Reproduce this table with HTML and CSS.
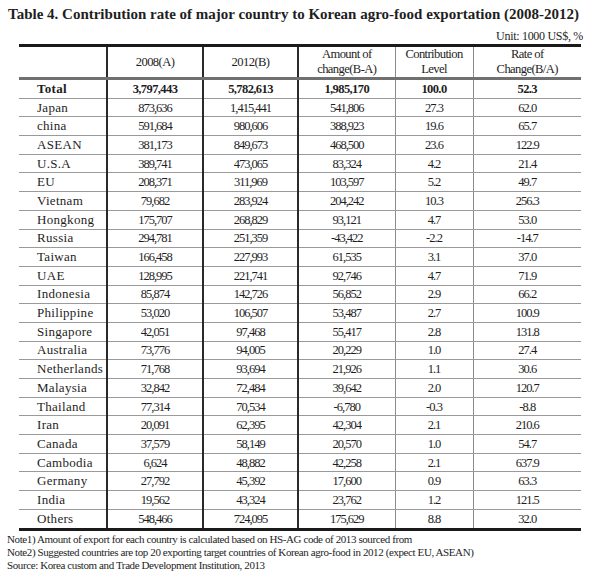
FILE: index.html
```html
<!DOCTYPE html>
<html>
<head>
<meta charset="utf-8">
<link rel="stylesheet" href="styles.css">
</head>
<body>
<div class="page">
  <h1 class="title">Table 4. Contribution rate of major country to Korean agro-food exportation (2008-2012)</h1>
  <div class="unit">Unit: 1000 US$, %</div>
  <table class="data">
    <colgroup>
      <col class="c-name"><col class="c-a"><col class="c-b"><col class="c-chg"><col class="c-lvl"><col class="c-rate">
    </colgroup>
    <thead>
      <tr>
        <th class="name"></th>
        <th class="thick">2008(A)</th>
        <th class="thick">2012(B)</th>
        <th>Amount of<br>change(B-A)</th>
        <th>Contribution<br>Level</th>
        <th>Rate of<br>Change(B/A)</th>
      </tr>
    </thead>
    <tbody>
      <tr class="total"><td class="name">Total</td><td class="thick">3,797,443</td><td class="thick">5,782,613</td><td>1,985,170</td><td>100.0</td><td>52.3</td></tr>
      <tr><td class="name">Japan</td><td class="thick">873,636</td><td class="thick">1,415,441</td><td>541,806</td><td>27.3</td><td>62.0</td></tr>
      <tr><td class="name">china</td><td class="thick">591,684</td><td class="thick">980,606</td><td>388,923</td><td>19.6</td><td>65.7</td></tr>
      <tr><td class="name">ASEAN</td><td class="thick">381,173</td><td class="thick">849,673</td><td>468,500</td><td>23.6</td><td>122.9</td></tr>
      <tr><td class="name">U.S.A</td><td class="thick">389,741</td><td class="thick">473,065</td><td>83,324</td><td>4.2</td><td>21.4</td></tr>
      <tr><td class="name">EU</td><td class="thick">208,371</td><td class="thick">311,969</td><td>103,597</td><td>5.2</td><td>49.7</td></tr>
      <tr><td class="name">Vietnam</td><td class="thick">79,682</td><td class="thick">283,924</td><td>204,242</td><td>10.3</td><td>256.3</td></tr>
      <tr><td class="name">Hongkong</td><td class="thick">175,707</td><td class="thick">268,829</td><td>93,121</td><td>4.7</td><td>53.0</td></tr>
      <tr><td class="name">Russia</td><td class="thick">294,781</td><td class="thick">251,359</td><td>-43,422</td><td>-2.2</td><td>-14.7</td></tr>
      <tr><td class="name">Taiwan</td><td class="thick">166,458</td><td class="thick">227,993</td><td>61,535</td><td>3.1</td><td>37.0</td></tr>
      <tr><td class="name">UAE</td><td class="thick">128,995</td><td class="thick">221,741</td><td>92,746</td><td>4.7</td><td>71.9</td></tr>
      <tr><td class="name">Indonesia</td><td class="thick">85,874</td><td class="thick">142,726</td><td>56,852</td><td>2.9</td><td>66.2</td></tr>
      <tr><td class="name">Philippine</td><td class="thick">53,020</td><td class="thick">106,507</td><td>53,487</td><td>2.7</td><td>100.9</td></tr>
      <tr><td class="name">Singapore</td><td class="thick">42,051</td><td class="thick">97,468</td><td>55,417</td><td>2.8</td><td>131.8</td></tr>
      <tr><td class="name">Australia</td><td class="thick">73,776</td><td class="thick">94,005</td><td>20,229</td><td>1.0</td><td>27.4</td></tr>
      <tr><td class="name">Netherlands</td><td class="thick">71,768</td><td class="thick">93,694</td><td>21,926</td><td>1.1</td><td>30.6</td></tr>
      <tr><td class="name">Malaysia</td><td class="thick">32,842</td><td class="thick">72,484</td><td>39,642</td><td>2.0</td><td>120.7</td></tr>
      <tr><td class="name">Thailand</td><td class="thick">77,314</td><td class="thick">70,534</td><td>-6,780</td><td>-0.3</td><td>-8.8</td></tr>
      <tr><td class="name">Iran</td><td class="thick">20,091</td><td class="thick">62,395</td><td>42,304</td><td>2.1</td><td>210.6</td></tr>
      <tr><td class="name">Canada</td><td class="thick">37,579</td><td class="thick">58,149</td><td>20,570</td><td>1.0</td><td>54.7</td></tr>
      <tr><td class="name">Cambodia</td><td class="thick">6,624</td><td class="thick">48,882</td><td>42,258</td><td>2.1</td><td>637.9</td></tr>
      <tr><td class="name">Germany</td><td class="thick">27,792</td><td class="thick">45,392</td><td>17,600</td><td>0.9</td><td>63.3</td></tr>
      <tr><td class="name">India</td><td class="thick">19,562</td><td class="thick">43,324</td><td>23,762</td><td>1.2</td><td>121.5</td></tr>
      <tr class="last"><td class="name">Others</td><td class="thick">548,466</td><td class="thick">724,095</td><td>175,629</td><td>8.8</td><td>32.0</td></tr>
    </tbody>
  </table>
  <div class="notes">
    <p>Note1) Amount of export for each country is calculated based on HS-AG code of 2013 sourced from</p>
    <p>Note2) Suggested countries are top 20 exporting target countries of Korean agro-food in 2012 (expect EU, ASEAN)</p>
    <p>Source: Korea custom and Trade Development Institution, 2013</p>
  </div>
</div>
</body>
</html>
```

FILE: styles.css
```css
html, body {
  margin: 0;
  padding: 0;
  background: #ffffff;
}

.page {
  width: 600px;
  height: 574px;
  box-sizing: border-box;
  padding: 5px 0 0 8px;
  font-family: "Liberation Serif", "Times New Roman", serif;
  color: #1e1e1e;
}

.title {
  margin: 0;
  font-size: 15px;
  font-weight: bold;
  line-height: 18px;
  letter-spacing: 0;
  white-space: nowrap;
}

.unit {
  margin-top: 7px;
  padding-right: 17px;
  text-align: right;
  font-size: 12px;
  line-height: 12px;
  letter-spacing: -0.3px;
}

.data {
  margin: 2px 0 0 11px;
  width: 562px;
  border-collapse: collapse;
  table-layout: fixed;
  border-top: 3px solid #1a1a1a;
  border-bottom: 3px solid #1a1a1a;
}

.c-name { width: 88px; }
.c-a { width: 96px; }
.c-b { width: 95px; }
.c-chg { width: 97px; }
.c-lvl { width: 78px; }
.c-rate { width: 108px; }

.data th,
.data td {
  padding: 0;
  text-align: center;
  border-left: 1px solid #8a8a8a;
  border-right: 1px solid #8a8a8a;
}

.data th:first-child,
.data td:first-child {
  border-left: none;
}

.data th:last-child,
.data td:last-child {
  border-right: none;
}

.data .thick {
  border-left: 2px solid #2a2a2a;
  border-right: 2px solid #2a2a2a;
}

.data thead th {
  height: 29px;
  font-weight: normal;
  font-size: 12.6px;
  line-height: 15px;
  letter-spacing: -0.6px;
  border-bottom: 3px solid #707070;
}

.data tbody td {
  height: 17.7px;
  font-size: 12.5px;
  line-height: 14px;
  letter-spacing: -1px;
  border-bottom: 1px solid #9a9a9a;
}

.data tbody tr.last td {
  border-bottom: none;
}

.data tbody td.name {
  text-align: left;
  padding-left: 18px;
  font-size: 13px;
  letter-spacing: 0.3px;
}

.data tr.total td {
  font-weight: bold;
  letter-spacing: -0.6px;
}

.data tr.total td.name {
  letter-spacing: 0.3px;
}

.notes {
  margin-top: 2px;
  margin-left: -1px;
  font-size: 11px;
  line-height: 13px;
  letter-spacing: -0.4px;
}

.notes p {
  margin: 0;
}
```
